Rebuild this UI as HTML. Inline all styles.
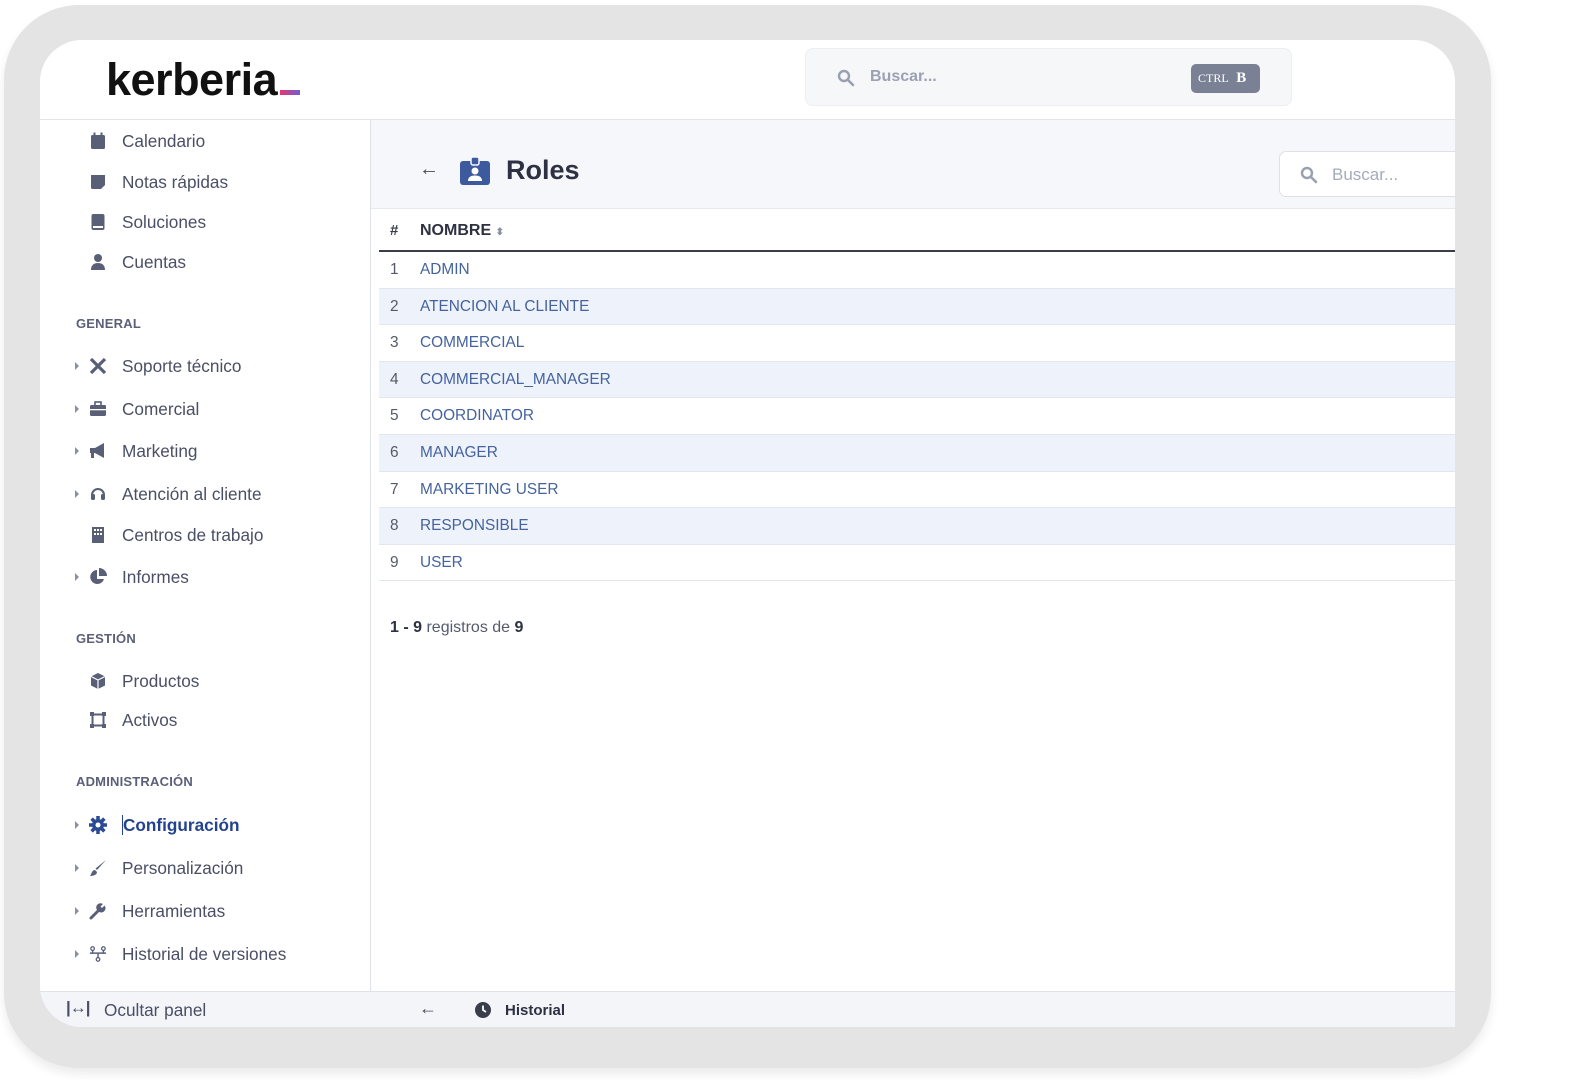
<!DOCTYPE html>
<html><head><meta charset="utf-8">
<style>
*{margin:0;padding:0;box-sizing:border-box}
body{width:1593px;height:1080px;background:#fff;position:relative;overflow:hidden;font-family:"Liberation Sans",sans-serif;}
.abs{position:absolute}
.frame{left:4px;top:5px;width:1487px;height:1063px;background:#e4e4e4;border-radius:75px;box-shadow:0 6px 10px rgba(0,0,0,0.08)}
.panel{left:40px;top:40px;width:1415px;height:987px;background:#fff;border-radius:42px 42px 0 42px;overflow:hidden}
.hdr{left:0;top:0;width:1422px;height:80px;border-bottom:1px solid #e2e5ea;background:#fff}
.side{left:0;top:80px;width:331px;height:907px;border-right:1px solid #dfe2e8;background:#fff}
.main{left:331px;top:80px;width:1091px;height:907px;background:#fff}
.item{position:absolute;left:82px;font-size:17.2px;color:#4a4f66;line-height:20px;transform:translateY(-10px)}
.ic{position:absolute;left:49px;width:18px;height:18px;transform:translateY(-9px)}
.car{position:absolute;left:35px;width:0;height:0;border-top:4px solid transparent;border-bottom:4px solid transparent;border-left:4px solid #8a8fa3;transform:translateY(-4px)}
.sec{position:absolute;left:36px;font-size:13px;color:#5b6078;transform:translateY(-8px);letter-spacing:0.2px;font-weight:bold}
.row{position:absolute;left:8px;width:1090px;height:36.6px;border-bottom:1px solid #e3e6ec;font-size:15.4px;line-height:36px;color:#45639f}
.row.alt{background:#eef2fa}
.row .n{position:absolute;left:11px;color:#555a66}
.row .t{position:absolute;left:41px}
</style></head><body>
<div class="abs frame"></div>
<div class="abs panel">
  <div class="abs hdr">
    <div class="abs" style="left:66px;top:14px;font-size:45px;font-weight:bold;color:#111;letter-spacing:-0.5px;white-space:nowrap">kerberia<span style="display:inline-block;width:20px;height:5px;margin-left:3px;background:linear-gradient(90deg,#e8366f,#6b5fd6)"></span></div>
    <div class="abs" style="left:765px;top:8px;width:487px;height:58px;background:#f6f7f9;border:1px solid #eceef1;border-radius:8px">
      <svg class="abs" style="left:31px;top:20px" width="18" height="18" viewBox="0 0 18 18"><circle cx="7" cy="7" r="5" fill="none" stroke="#9aa0b0" stroke-width="2.4"/><path d="M11 11l5 5" stroke="#9aa0b0" stroke-width="2.6" stroke-linecap="round"/></svg>
      <div class="abs" style="left:64px;top:19px;font-size:16px;font-weight:bold;color:#9ba1b3">Buscar...</div>
      <div class="abs" style="left:385px;top:15px;width:69px;height:29px;background:#7a8194;border-radius:5px;color:#fff;font-family:'Liberation Serif',serif;font-size:12px;line-height:29px;padding-left:7px">CTRL <b style="font-size:15px;margin-left:5px">B</b></div>
    </div>
  </div>
  <div class="abs side">
    <svg class="ic" style="top:21px" viewBox="0 0 18 18"><rect x="2" y="3" width="14" height="14" rx="1.5" fill="#5a5f78"/><rect x="4.5" y="0.5" width="2" height="4" fill="#5a5f78"/><rect x="11.5" y="0.5" width="2" height="4" fill="#5a5f78"/></svg>
    <div class="item" style="top:21px">Calendario</div>
    <svg class="ic" style="top:62px" viewBox="0 0 18 18"><path d="M2 2h14v10l-4 4H3.5A1.5 1.5 0 0 1 2 14.5z" fill="#5a5f78"/></svg>
    <div class="item" style="top:62px">Notas rápidas</div>
    <svg class="ic" style="top:102px" viewBox="0 0 18 18"><rect x="2.5" y="1" width="13" height="16" rx="2" fill="#5a5f78"/><rect x="4" y="13" width="10" height="2" fill="#fff"/></svg>
    <div class="item" style="top:102px">Soluciones</div>
    <svg class="ic" style="top:142px" viewBox="0 0 18 18"><circle cx="9" cy="5" r="4" fill="#5a5f78"/><path d="M2 17c0-5 3-7 7-7s7 2 7 7z" fill="#5a5f78"/></svg>
    <div class="item" style="top:142px">Cuentas</div>
    <div class="sec" style="top:204px">GENERAL</div>
    <div class="car" style="top:246px"></div>
    <svg class="ic" style="top:246px" viewBox="0 0 18 18"><path d="M2 2l14 14M16 2L2 16" stroke="#5a5f78" stroke-width="3.2"/></svg>
    <div class="item" style="top:246px">Soporte técnico</div>
    <div class="car" style="top:289px"></div>
    <svg class="ic" style="top:289px" viewBox="0 0 18 18"><rect x="1" y="5" width="16" height="11" rx="1.5" fill="#5a5f78"/><rect x="6" y="2" width="6" height="4" fill="none" stroke="#5a5f78" stroke-width="1.6"/><rect x="1" y="9" width="16" height="1.3" fill="#fff"/></svg>
    <div class="item" style="top:289px">Comercial</div>
    <div class="car" style="top:331px"></div>
    <svg class="ic" style="top:331px" viewBox="0 0 18 18"><path d="M1 6h5l9-5v15l-9-5H5v5H2v-5H1z" fill="#5a5f78"/></svg>
    <div class="item" style="top:331px">Marketing</div>
    <div class="car" style="top:374px"></div>
    <svg class="ic" style="top:374px" viewBox="0 0 18 18"><path d="M3 10a6 6 0 0 1 12 0" fill="none" stroke="#5a5f78" stroke-width="2"/><rect x="2" y="9" width="4" height="6" rx="1.5" fill="#5a5f78"/><rect x="12" y="9" width="4" height="6" rx="1.5" fill="#5a5f78"/></svg>
    <div class="item" style="top:374px">Atención al cliente</div>
    <svg class="ic" style="top:415px" viewBox="0 0 18 18"><rect x="3" y="1" width="12" height="16" fill="#5a5f78"/><rect x="5" y="3" width="2" height="2" fill="#fff"/><rect x="8" y="3" width="2" height="2" fill="#fff"/><rect x="11" y="3" width="2" height="2" fill="#fff"/><rect x="5" y="7" width="2" height="2" fill="#fff"/><rect x="8" y="7" width="2" height="2" fill="#fff"/><rect x="11" y="7" width="2" height="2" fill="#fff"/></svg>
    <div class="item" style="top:415px">Centros de trabajo</div>
    <div class="car" style="top:457px"></div>
    <svg class="ic" style="top:457px" viewBox="0 0 18 18"><path d="M8 2a7 7 0 1 0 7 9H8z" fill="#5a5f78"/><path d="M10 0v8h8a8 8 0 0 0-8-8z" fill="#5a5f78"/></svg>
    <div class="item" style="top:457px">Informes</div>
    <div class="sec" style="top:519px">GESTIÓN</div>
    <svg class="ic" style="top:561px" viewBox="0 0 18 18"><path d="M9 1l7 3.5v9L9 17l-7-3.5v-9z" fill="#5a5f78"/><path d="M2 4.5L9 8l7-3.5M9 8v9" stroke="#fff" stroke-width="1.2" fill="none"/></svg>
    <div class="item" style="top:561px">Productos</div>
    <svg class="ic" style="top:600px" viewBox="0 0 18 18"><rect x="3.5" y="3.5" width="11" height="11" fill="none" stroke="#5a5f78" stroke-width="2"/><rect x="1" y="1" width="4" height="4" fill="#5a5f78"/><rect x="13" y="1" width="4" height="4" fill="#5a5f78"/><rect x="1" y="13" width="4" height="4" fill="#5a5f78"/><rect x="13" y="13" width="4" height="4" fill="#5a5f78"/></svg>
    <div class="item" style="top:600px">Activos</div>
    <div class="sec" style="top:662px">ADMINISTRACIÓN</div>
    <div class="car" style="top:705px"></div>
    <svg class="ic" style="top:705px" viewBox="0 0 18 18"><circle cx="9" cy="9" r="6" fill="#2b4a94"/><path d="M9 0v18M0 9h18M2.6 2.6l12.8 12.8M15.4 2.6L2.6 15.4" stroke="#2b4a94" stroke-width="3.5"/><circle cx="9" cy="9" r="2.5" fill="#fff"/></svg>
    <div class="item" style="top:705px;color:#24438e;font-weight:bold;border-left:1.5px solid #24438e;padding-left:0">Configuración</div>
    <div class="car" style="top:748px"></div>
    <svg class="ic" style="top:748px" viewBox="0 0 18 18"><path d="M17 1L8 11l-1.5-1.5z" fill="#5a5f78"/><path d="M6 11c-3 0-3 3-5 6 3 0 7-1 7-4z" fill="#5a5f78"/></svg>
    <div class="item" style="top:748px">Personalización</div>
    <div class="car" style="top:791px"></div>
    <svg class="ic" style="top:791px" viewBox="0 0 18 18"><path d="M2 16l8-8" stroke="#5a5f78" stroke-width="3" stroke-linecap="round"/><path d="M9 9a4 4 0 0 1 5-7l-2.5 2.5 1.5 1.5L15.5 3.5A4 4 0 0 1 9 9z" fill="#5a5f78"/></svg>
    <div class="item" style="top:791px">Herramientas</div>
    <div class="car" style="top:834px"></div>
    <svg class="ic" style="top:834px" viewBox="0 0 20 18"><circle cx="4" cy="3" r="2" fill="none" stroke="#5a5f78" stroke-width="1.4"/><circle cx="16" cy="3" r="2" fill="none" stroke="#5a5f78" stroke-width="1.4"/><circle cx="10" cy="15" r="2" fill="none" stroke="#5a5f78" stroke-width="1.4"/><path d="M1 8h18M4 5v3M16 5v3M10 8v5" stroke="#5a5f78" stroke-width="1.6"/></svg>
    <div class="item" style="top:834px">Historial de versiones</div>
    <div class="abs" style="left:0;top:871px;width:331px;height:36px;background:#f3f5f8;border-top:1px solid #dfe2e8">
      <div class="abs" style="left:26px;top:6px;font-size:17px;font-weight:bold;color:#4a4f66;letter-spacing:-1px">|↔|</div>
      <div class="abs" style="left:64px;top:8px;font-size:17.2px;color:#4a4f66">Ocultar panel</div>
    </div>
  </div>
  <div class="abs main">
    <div class="abs" style="left:0;top:0;width:1091px;height:89px;background:#f5f7fa;border-bottom:1px solid #e6e9ee"></div>
    <div class="abs" style="left:48px;top:38px;font-size:20px;color:#444a5c">←</div>
    <svg class="abs" style="left:89px;top:37px" width="30" height="28" viewBox="0 0 30 28"><rect x="0" y="4" width="30" height="24" rx="3" fill="#3d5a9e"/><rect x="11" y="0" width="8" height="8" rx="2" fill="#3d5a9e" stroke="#f5f7fa" stroke-width="1.5"/><circle cx="15" cy="14" r="3.5" fill="#fff"/><path d="M8 24c0-4 3-5.5 7-5.5s7 1.5 7 5.5z" fill="#fff"/></svg>
    <div class="abs" style="left:135px;top:35px;font-size:27px;font-weight:bold;color:#2d3142">Roles</div>
    <div class="abs" style="left:908px;top:31px;width:200px;height:46px;background:#fff;border:1px solid #dde1e7;border-radius:7px">
      <svg class="abs" style="left:20px;top:14px" width="18" height="18" viewBox="0 0 18 18"><circle cx="7" cy="7" r="5" fill="none" stroke="#9aa0b0" stroke-width="2.4"/><path d="M11 11l5 5" stroke="#9aa0b0" stroke-width="2.6" stroke-linecap="round"/></svg>
      <div class="abs" style="left:52px;top:13px;font-size:17px;color:#a5abbb">Buscar...</div>
    </div>
    <div class="abs" style="left:19px;top:102px;font-size:15px;font-weight:bold;color:#3a3d4a">#</div>
    <div class="abs" style="left:49px;top:102px;font-size:16px;font-weight:bold;color:#2d3142">NOMBRE <span style="font-size:10px;color:#8a8fa3">⬍</span></div>
    <div class="abs" style="left:8px;top:130px;width:1090px;height:2px;background:#3a3d4a"></div>
    <div class="row" style="top:132px"><span class="n">1</span><span class="t">ADMIN</span></div>
    <div class="row alt" style="top:168.6px"><span class="n">2</span><span class="t">ATENCION AL CLIENTE</span></div>
    <div class="row" style="top:205.2px"><span class="n">3</span><span class="t">COMMERCIAL</span></div>
    <div class="row alt" style="top:241.8px"><span class="n">4</span><span class="t">COMMERCIAL_MANAGER</span></div>
    <div class="row" style="top:278.4px"><span class="n">5</span><span class="t">COORDINATOR</span></div>
    <div class="row alt" style="top:315px"><span class="n">6</span><span class="t">MANAGER</span></div>
    <div class="row" style="top:351.6px"><span class="n">7</span><span class="t">MARKETING USER</span></div>
    <div class="row alt" style="top:388.2px"><span class="n">8</span><span class="t">RESPONSIBLE</span></div>
    <div class="row" style="top:424.8px"><span class="n">9</span><span class="t">USER</span></div>
    <div class="abs" style="left:19px;top:499px;font-size:16px;color:#555a6e"><b style="color:#2d3142">1 - 9</b> registros de <b style="color:#2d3142">9</b></div>
    <div class="abs" style="left:0;top:871px;width:1091px;height:36px;background:#f3f5f8;border-top:1px solid #dfe2e8">
      <div class="abs" style="left:48px;top:6px;font-size:18px;color:#444a5c">←</div>
      <svg class="abs" style="left:104px;top:10px" width="16" height="16" viewBox="0 0 16 16"><circle cx="8" cy="8" r="8" fill="#3a3d4a"/><path d="M8 3.5V8l3 2" stroke="#fff" stroke-width="1.8" fill="none"/></svg>
      <div class="abs" style="left:134px;top:10px;font-size:15px;font-weight:bold;color:#2d3142">Historial</div>
    </div>
  </div>
</div>
</body></html>
